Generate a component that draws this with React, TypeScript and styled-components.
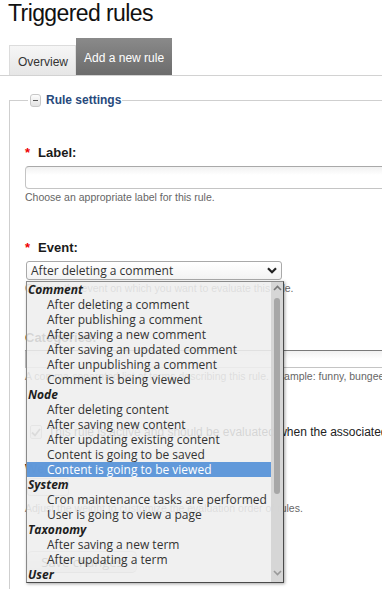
import styled, { createGlobalStyle } from "styled-components";

const GlobalStyle = createGlobalStyle`
  html, body {
    margin: 0;
    padding: 0;
    overflow: hidden;
    background: #fff;
  }
  body {
    font-family: "Liberation Sans", Arial, sans-serif;
    font-size: 12px;
    color: #333;
  }
`;

const Page = styled.div`
  width: 460px;
  height: 589px;
  overflow: hidden;
`;

const Title = styled.h1`
  margin: 1px 0 0 8px;
  font-size: 23px;
  line-height: 24px;
  font-weight: normal;
  letter-spacing: -0.6px;
  color: #111;
`;

const TabBar = styled.ul`
  display: flex;
  align-items: flex-end;
  list-style: none;
  margin: 13px 0 0;
  padding: 0 0 0 9px;
  height: 37px;
  border-bottom: 1px solid #d2d2d2;
`;

const Tab = styled.li<{ $active?: boolean }>`
  box-sizing: border-box;
  height: ${(p) => (p.$active ? 37 : 30)}px;
  padding: ${(p) => (p.$active ? "12px 8px 0 8px" : "8px 7px 0 8px")};
  font-size: 12px;
  line-height: 16px;
  color: ${(p) => (p.$active ? "#fff" : "#333")};
  background: ${(p) =>
    p.$active
      ? "linear-gradient(#8a8a8a, #6c6c6c)"
      : "linear-gradient(#f6f6f6, #e6e6e6)"};
  border: ${(p) => (p.$active ? "none" : "1px solid #dcdcdc")};
  border-bottom: none;
`;

const Fieldset = styled.fieldset`
  margin: 17px 0 0 9px;
  padding: 0 0 30px 15px;
  width: 430px;
  min-width: 0;
  border: 1px solid #cfcfcf;
`;

const Legend = styled.legend`
  display: flex;
  align-items: center;
  gap: 5px;
  margin-left: 3px;
  padding: 0 1px 0 2px;
  font-size: 12px;
  line-height: 15px;
  font-weight: bold;
  color: #284a7c;
`;

const CollapseBox = styled.span`
  box-sizing: border-box;
  width: 11px;
  height: 13px;
  border: 1px solid #c8c8c8;
  border-radius: 3px;
  background: linear-gradient(#fdfdfd, #e2e2e2);
  display: flex;
  align-items: center;
  justify-content: center;
  &::before {
    content: "";
    width: 5px;
    height: 1px;
    background: #555;
  }
`;

const FormItem = styled.div<{ $gap: number }>`
  margin-top: ${(p) => p.$gap}px;
`;

const Label = styled.label`
  display: block;
  font-size: 13px;
  line-height: 16px;
  font-weight: bold;
  color: #1a1a1a;
`;

const RequiredMark = styled.span`
  color: #e00;
  margin-right: 8px;
`;

const TextInput = styled.input<{ $h: number; $dark?: boolean }>`
  display: block;
  box-sizing: border-box;
  width: 420px;
  height: ${(p) => p.$h}px;
  margin: ${(p) => (p.$dark ? "4px 0 0" : "5px 0 0")};
  border: 1px solid #c4c4c4;
  border-top-color: ${(p) => (p.$dark ? "#7a7a7a" : "#a9a9a9")};
  border-radius: ${(p) => (p.$dark ? 0 : 4)}px;
  background: linear-gradient(#f1f1f1, #fff 8px);
  font: inherit;
`;

const Description = styled.div<{ $top?: number }>`
  margin-top: ${(p) => p.$top ?? 1}px;
  font-size: 10.5px;
  line-height: 14px;
  color: #666;
  white-space: nowrap;
`;

const SelectWrap = styled.div`
  position: relative;
  margin-top: 5px;
  height: 19px;
`;

const SelectBox = styled.div`
  box-sizing: border-box;
  width: 256px;
  height: 19px;
  margin-left: 1px;
  padding: 0 0 0 4px;
  display: flex;
  align-items: center;
  justify-content: space-between;
  border: 1px solid #a9a9a9;
  border-radius: 3px;
  background: linear-gradient(#fff, #f3f3f3);
  font-family: "Open Sans", "Noto Sans", sans-serif;
  font-size: 12px;
  line-height: 16px;
  color: #333;
`;

const Chevron = styled.svg`
  margin-right: 4px;
  flex-shrink: 0;
`;

const ListBox = styled.div`
  position: absolute;
  top: calc(100% + 1px);
  left: 1px;
  z-index: 5;
  box-sizing: border-box;
  width: 258px;
  height: 302px;
  display: flex;
  border: 1px solid #4a4a4a;
  border-top-color: #8a8a8a;
  border-left-color: #8a8a8a;
  background: rgba(238, 238, 238, 0.88);
  box-shadow: 1px 1px 3px rgba(0, 0, 0, 0.35);
  font-family: "Open Sans", "Noto Sans", sans-serif;
  font-size: 12px;
`;

const Options = styled.div`
  flex: 1;
  display: flex;
  flex-direction: column;
`;

const Row = styled.div<{ $group?: boolean; $selected?: boolean }>`
  height: 15px;
  line-height: 15px;
  padding-left: ${(p) => (p.$group ? 1 : 20)}px;
  white-space: nowrap;
  overflow: hidden;
  font-weight: ${(p) => (p.$group ? "bold" : "normal")};
  font-style: ${(p) => (p.$group ? "italic" : "normal")};
  color: ${(p) => (p.$selected ? "#fff" : p.$group ? "#1e1e1e" : "#333")};
  background: ${(p) => (p.$selected ? "rgba(86, 146, 216, 0.93)" : "transparent")};
`;

const ScrollTrack = styled.div`
  width: 12px;
  display: flex;
  flex-direction: column;
  align-items: center;
  background: rgba(212, 212, 212, 0.92);
`;

const ScrollThumb = styled.div`
  width: 6px;
  height: 196px;
  margin-top: 7px;
  border-radius: 3px;
  background: #a7a7a7;
`;

const ScrollArrow = styled.svg<{ $down?: boolean }>`
  margin-top: ${(p) => (p.$down ? "auto" : "3px")};
  margin-bottom: ${(p) => (p.$down ? "6px" : "0")};
`;

const CheckRow = styled.div`
  display: flex;
  align-items: center;
  gap: 6px;
  padding-left: 5px;
  font-size: 12px;
  line-height: 16px;
  color: #222;
  white-space: nowrap;
`;

const CheckBox = styled.span`
  box-sizing: border-box;
  width: 14px;
  height: 14px;
  border: 1px solid #a5a5a5;
  border-radius: 2px;
  background: linear-gradient(#fff, #e8e8e8);
  display: flex;
  align-items: center;
  justify-content: center;
`;

const SmallSelect = styled.div`
  box-sizing: border-box;
  width: 42px;
  height: 18px;
  margin: 1px 0 0 2px;
  padding-left: 4px;
  border: 1px solid #b5b5b5;
  border-radius: 3px;
  background: linear-gradient(#fff, #efefef);
  font-family: "Open Sans", "Noto Sans", sans-serif;
  font-size: 12px;
  line-height: 16px;
`;

const SubmitButton = styled.button`
  box-sizing: border-box;
  width: 110px;
  height: 22px;
  margin-left: 2px;
  border: 1px solid #c6c6c6;
  border-bottom-color: #a8a8a8;
  border-radius: 5px;
  background: linear-gradient(#fafafa, #e3e3e3);
  font-family: "Open Sans", "Noto Sans", sans-serif;
  font-size: 13px;
  color: #333;
  padding: 0;
`;

type Opt = { text: string; group?: boolean; selected?: boolean };

const events: Opt[] = [
  { text: "Comment", group: true },
  { text: "After deleting a comment" },
  { text: "After publishing a comment" },
  { text: "After saving a new comment" },
  { text: "After saving an updated comment" },
  { text: "After unpublishing a comment" },
  { text: "Comment is being viewed" },
  { text: "Node", group: true },
  { text: "After deleting content" },
  { text: "After saving new content" },
  { text: "After updating existing content" },
  { text: "Content is going to be saved" },
  { text: "Content is going to be viewed", selected: true },
  { text: "System", group: true },
  { text: "Cron maintenance tasks are performed" },
  { text: "User is going to view a page" },
  { text: "Taxonomy", group: true },
  { text: "After saving a new term" },
  { text: "After updating a term" },
  { text: "User", group: true },
];

function App() {
  return (
    <Page>
      <GlobalStyle />
      <Title>Triggered rules</Title>
      <TabBar>
        <Tab>Overview</Tab>
        <Tab $active>Add a new rule</Tab>
      </TabBar>

      <Fieldset>
        <Legend>
          <CollapseBox />
          Rule settings
        </Legend>

        <FormItem $gap={37}>
          <Label>
            <RequiredMark>*</RequiredMark>Label:
          </Label>
          <TextInput $h={23} />
          <Description>Choose an appropriate label for this rule.</Description>
        </FormItem>

        <FormItem $gap={36}>
          <Label>
            <RequiredMark>*</RequiredMark>Event:
          </Label>
          <SelectWrap>
            <SelectBox>
              After deleting a comment
              <Chevron width="10" height="7" viewBox="0 0 10 7">
                <path d="M1 1.2 5 5.2 9 1.2" fill="none" stroke="#222" strokeWidth="2.2" />
              </Chevron>
            </SelectBox>
            <ListBox role="listbox">
              <Options>
                {events.map((o) => (
                  <Row key={o.text} $group={o.group} $selected={o.selected}>
                    {o.text}
                  </Row>
                ))}
              </Options>
              <ScrollTrack>
                <ScrollArrow width="9" height="6" viewBox="0 0 9 6">
                  <path d="M1 5 4.5 1.5 8 5" fill="none" stroke="#777" strokeWidth="1.6" />
                </ScrollArrow>
                <ScrollThumb />
                <ScrollArrow $down width="9" height="6" viewBox="0 0 9 6">
                  <path d="M1 1 4.5 4.5 8 1" fill="none" stroke="#999" strokeWidth="1.6" />
                </ScrollArrow>
              </ScrollTrack>
            </ListBox>
          </SelectWrap>
          <Description>Choose the event on which you want to evaluate this rule.</Description>
        </FormItem>

        <FormItem $gap={35}>
          <Label>Categories:</Label>
          <TextInput $h={18} $dark />
          <Description>
            A comma-separated list of terms describing this rule. Example: funny, bungee jumping.
          </Description>
        </FormItem>

        <FormItem $gap={41}>
          <CheckRow>
            <CheckBox>
              <svg width="10" height="9" viewBox="0 0 10 9">
                <path d="M1 4.5 4 7.5 9 1" fill="none" stroke="#555" strokeWidth="1.8" />
              </svg>
            </CheckBox>
            This rule is active and should be evaluated when the associated event occurs.
          </CheckRow>
        </FormItem>

        <FormItem $gap={21}>
          <Label>Weight</Label>
          <SmallSelect>0</SmallSelect>
          <Description $top={5}>
            Adjust the weight to customize the evaluation order of rules.
          </Description>
        </FormItem>

        <FormItem $gap={36}>
          <SubmitButton>Save changes</SubmitButton>
        </FormItem>
      </Fieldset>
    </Page>
  );
}

export default App;
